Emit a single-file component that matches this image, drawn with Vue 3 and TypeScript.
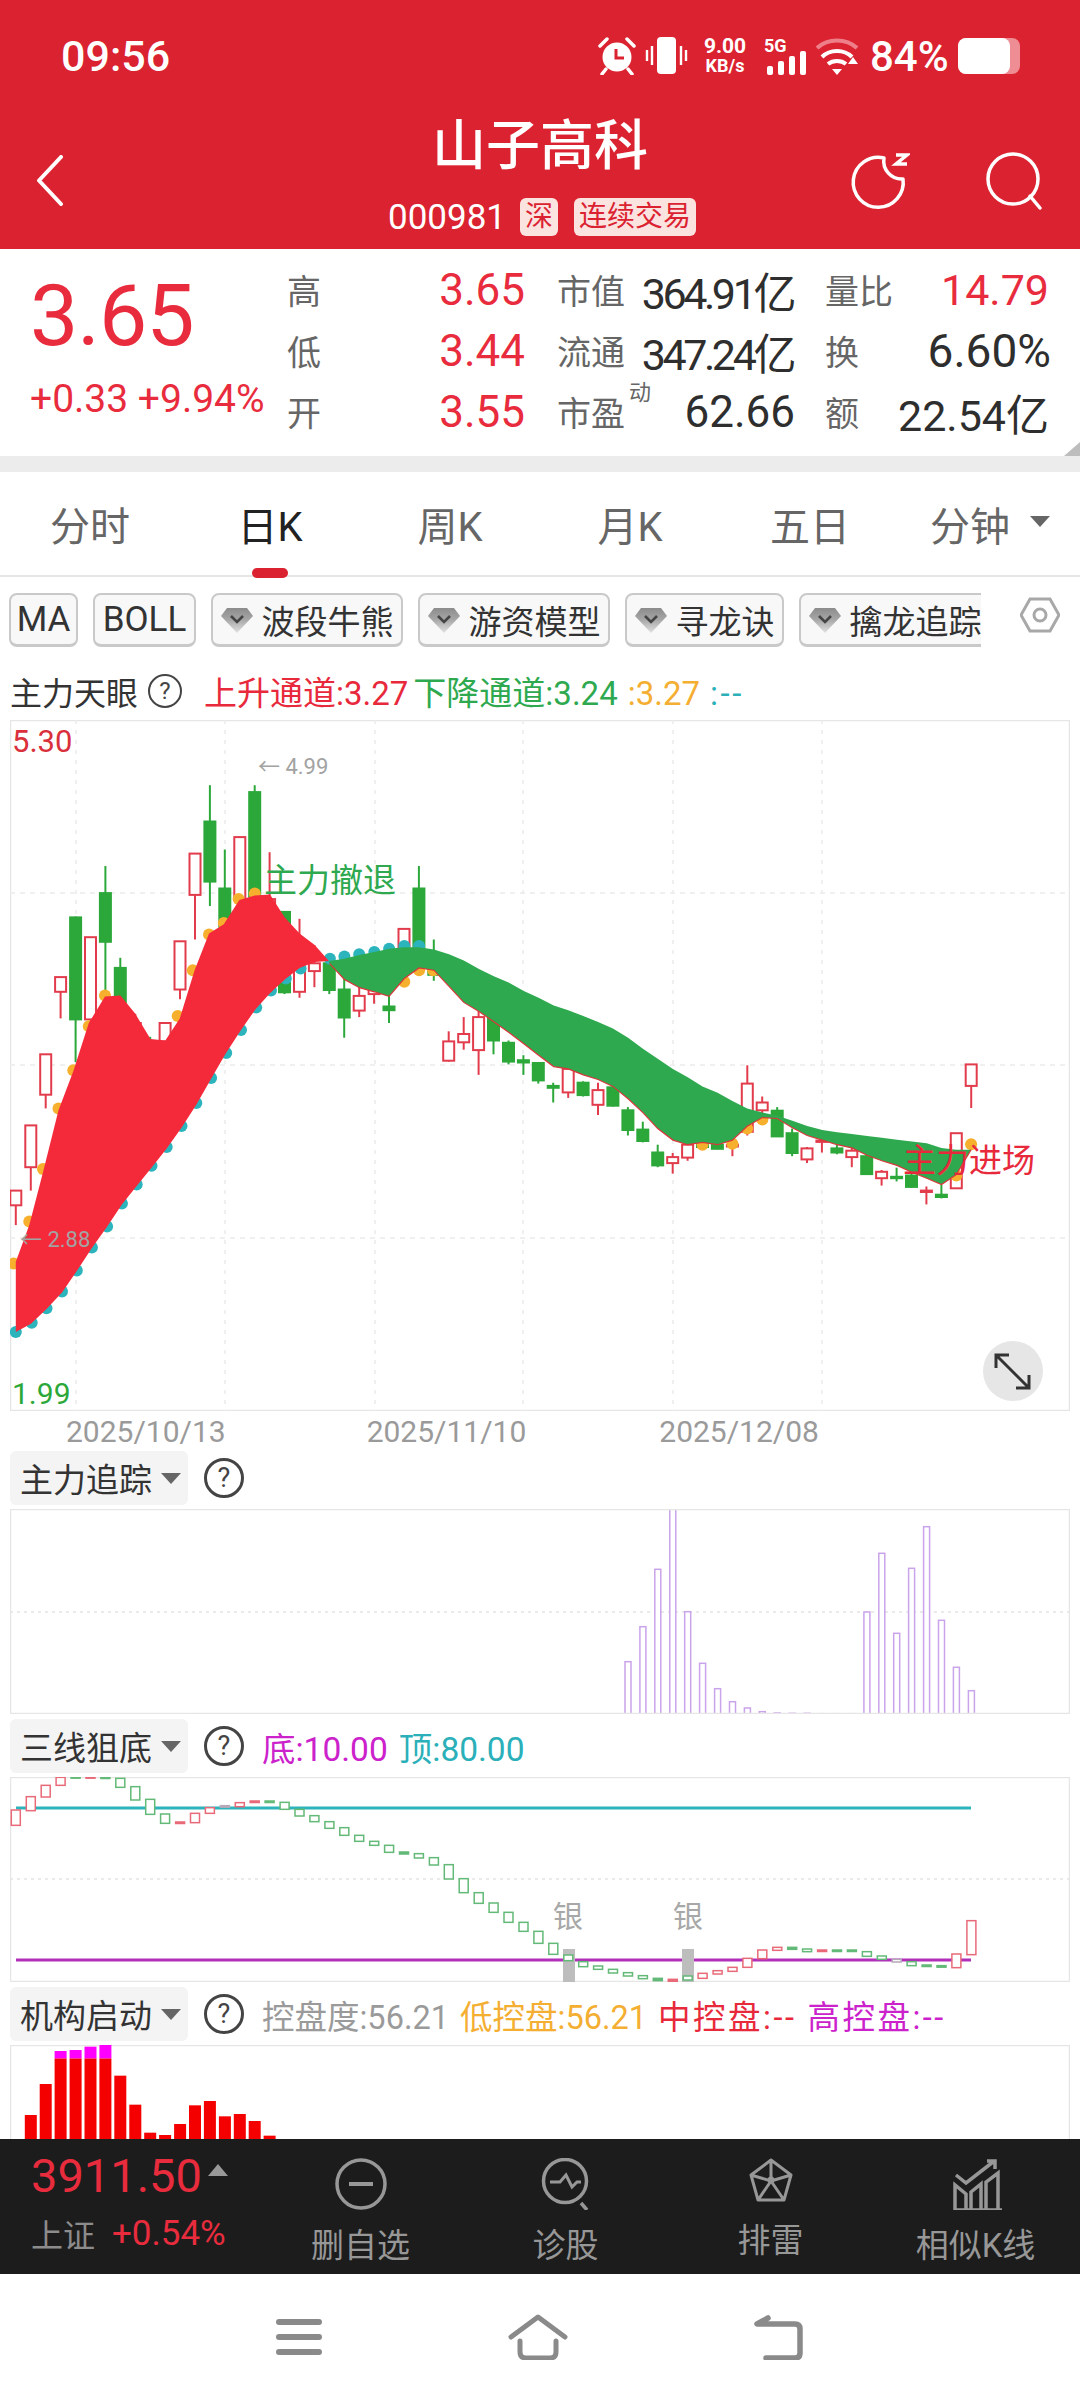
<template>
  <div class="page">
    <div class="content">
      <header class="header">
        <div class="status">
          <span class="clock">09:56</span>
          <div class="status-right">
            <svg class="st-alarm" width="38" height="38" viewBox="0 0 38 38">
              <circle cx="19" cy="20" r="14.5" fill="#fff" />
              <path d="M18 12v9h8" fill="none" stroke="#db2230" stroke-width="3" />
              <path d="M2 9l7-7M36 9l-7-7M8 32l-4 5M30 32l4 5" stroke="#fff" stroke-width="3.5" stroke-linecap="round" />
            </svg>
            <svg class="st-vibrate" width="43" height="38" viewBox="0 0 43 38">
              <rect x="12" y="0" width="19" height="37" rx="4" fill="#fff" />
              <path d="M2 13v11M7 9v19M36 9v19M41 13v11" stroke="#fff" stroke-width="2.4" />
            </svg>
            <div class="st-speed"><b>9.00</b><b class="kb">KB/s</b></div>
            <div class="st-net">
              <b>5G</b>
              <svg width="40" height="24" viewBox="0 0 40 24">
                <rect x="0" y="15" width="6" height="9" rx="2" fill="#fff" />
                <rect x="11" y="10" width="6" height="14" rx="2" fill="#fff" />
                <rect x="22" y="5" width="6" height="19" rx="2" fill="#fff" />
                <rect x="33" y="0" width="6" height="24" rx="2" fill="#fff" />
              </svg>
            </div>
            <svg class="st-wifi" width="44" height="38" viewBox="0 0 44 38">
              <path d="M2 11C13 1 31 1 42 11" fill="none" stroke="#ee7f88" stroke-width="4" />
              <path d="M7 20C15 12 29 12 37 20M13 27c5-4 13-4 18 0" fill="none" stroke="#fff" stroke-width="4" />
              <path d="M17 32h10l-5 6zM33 27h10l-5-7z" fill="#fff" />
            </svg>
            <span class="st-battery-text">84%</span>
            <div class="battery"><div class="battery-fill"></div></div>
          </div>
        </div>
        <div class="title-bar">
          <svg class="back" width="27" height="51" viewBox="0 0 27 51">
            <path d="M25 2L3 25.5 25 49" fill="none" stroke="#fff" stroke-width="4" stroke-linecap="round" stroke-linejoin="round" />
          </svg>
          <div class="title-box">
            <h1 class="title">山子高科</h1>
            <div class="subtitle">
              <span class="code">000981</span>
              <span class="tag">深</span>
              <span class="tag">连续交易</span>
            </div>
          </div>
          <div class="title-actions">
            <svg width="70" height="70" viewBox="0 0 70 70">
              <path d="M44 12A25 25 0 1 0 63 33A18 18 0 0 1 44 12Z" fill="none" stroke="#fff" stroke-width="3.5" stroke-linejoin="round" />
              <path d="M56 9h11L56 18h11" fill="none" stroke="#fff" stroke-width="3.5" />
            </svg>
            <svg width="70" height="70" viewBox="0 0 70 70">
              <circle cx="33" cy="33" r="25" fill="none" stroke="#fff" stroke-width="3.5" />
              <path d="M50 50l10 12" stroke="#fff" stroke-width="3.5" stroke-linecap="round" />
            </svg>
          </div>
        </div>
      </header>

      <section class="quote">
        <div class="price-box">
          <div class="price">3.65</div>
          <div class="change">+0.33 +9.94%</div>
        </div>
        <div class="quote-grid">
          <div v-for="row in quoteRows" :key="row[0].label" class="quote-row">
            <div v-for="(cell, n) in row" :key="cell.label" class="pair" :class="'pair-' + n">
              <span class="q-label">{{ cell.label }}<sup v-if="cell.sup" class="q-sup">{{ cell.sup }}</sup></span>
              <span class="q-value" :class="[cell.cls, { up: cell.up }]">{{ cell.value }}</span>
            </div>
          </div>
        </div>
        <i class="fold"></i>
      </section>
      <div class="band"></div>

      <nav class="tabs">
        <div v-for="tab in tabs" :key="tab" class="tab" :class="{ active: tab === '日K' }">
          {{ tab }}
          <i v-if="tab === '分钟'" class="caret caret-lg"></i>
        </div>
      </nav>

      <div class="chips-row">
        <div class="chips">
          <div v-for="chip in chips" :key="chip.name" class="chip" :class="{ 'chip-plain': !chip.gem }" :style="{ width: chip.width + 'px' }">
            <svg v-if="chip.gem" class="gem" width="32" height="26" viewBox="0 0 32 26">
              <path d="M6 1h20l6 8-16 17L0 9z" fill="url(#gemFill)" />
              <path d="M10 9l6 6 6-6" fill="none" stroke="#444" stroke-width="2.6" />
            </svg>
            {{ chip.name }}
          </div>
        </div>
        <svg class="hex" width="40" height="36" viewBox="0 0 40 36">
          <defs>
            <linearGradient id="gemFill" x1="0" y1="0" x2="0" y2="1" gradientUnits="objectBoundingBox">
              <stop offset="0" stop-color="#8c8c8c" />
              <stop offset="0.45" stop-color="#a5a5a5" />
              <stop offset="1" stop-color="#e2e2e2" />
            </linearGradient>
          </defs>
          <path d="M10 2h20l9 16-9 16H10L1 18z" fill="none" stroke="#a8a8a8" stroke-width="3" />
          <circle cx="20" cy="18" r="6" fill="none" stroke="#a8a8a8" stroke-width="3" />
        </svg>
      </div>

      <div class="main-title">
        <span class="ind-name">主力天眼</span>
        <span class="help help-sm">?</span>
        <span class="legend main-legend">
          <span class="c-red">上升通道:3.27</span>
          <span class="c-green">下降通道:3.24</span>
          <span class="c-orange gap-l">:3.27</span>
          <span class="c-teal gap-l dash">:--</span>
        </span>
      </div>

      <svg class="main-chart" width="1060" height="691" viewBox="0 0 1060 691">
        <rect x="0.5" y="0.5" width="1059" height="690" fill="none" stroke="#e6e6e6" stroke-width="1.5" />
        <path v-for="y in [173, 345, 518]" :key="'h' + y" :d="`M0 ${y}H1060`" stroke="#ececec" stroke-width="1.5" stroke-dasharray="5 5" />
        <path v-for="x in [66, 215, 365, 513, 663, 812]" :key="'v' + x" :d="`M${x} 0V691`" stroke="#ececec" stroke-width="1.5" stroke-dasharray="4 6" />

        <g v-for="(c, i) in candles" :key="'c' + i">
          <path :d="`M${candleX(i)} ${zy(c[0])}V${zy(c[3])}`" :stroke="c[4] === 'r' ? RED : GREEN" stroke-width="2" />
          <rect
            :x="candleX(i) - 5.5"
            :y="zy(c[1])"
            width="11"
            :height="zy(c[2]) - zy(c[1])"
            :fill="c[4] === 'r' ? '#fff' : GREEN"
            :stroke="c[4] === 'r' ? RED : GREEN"
            stroke-width="2"
          />
        </g>

        <circle v-for="(d, i) in orangeDots" :key="'o' + i" :cx="zx(d[0])" :cy="zy(d[1])" r="6" fill="#f7b02e" />
        <circle v-for="(d, i) in tealDots" :key="'t' + i" :cx="zx(d[0])" :cy="zy(d[1])" r="6" fill="#2cb4bd" />

        <polygon :points="pts(redBand)" fill="#f42a3b" />
        <polygon :points="pts(greenBand)" fill="#2ea94f" />
        <polyline :points="pts(greenLower)" fill="none" stroke="#d9383a" stroke-width="1.2" />

        <text class="axis-price" x="2" y="32" fill="#d9303c">5.30</text>
        <text class="axis-price axis-low" x="2" y="684" fill="#2ca83a">1.99</text>
        <text class="mark" x="248" y="54">← 4.99</text>
        <text class="mark" x="10" y="527">← 2.88</text>
        <text class="signal" x="254" y="172" fill="#2ea94f">主力撤退</text>
        <text class="signal" x="893" y="452" fill="#e8293c">主力进场</text>

        <circle cx="1003" cy="651" r="30" fill="#e6e6e6" />
        <path d="M986 635l33 33M986 648v-13h13M1019 655v13h-13" fill="none" stroke="#333" stroke-width="3" />
      </svg>
      <div class="dates">
        <span v-for="d in dates" :key="d" class="date">{{ d }}</span>
      </div>

      <section class="panel">
        <div class="panel-head">
          <div class="select">主力追踪<i class="caret"></i></div>
          <span class="help">?</span>
        </div>
        <svg class="sub-chart" width="1060" height="205" viewBox="0 0 1060 205">
          <path d="M0 103H1060" stroke="#e4e4e4" stroke-width="1.5" stroke-dasharray="3 4" />
          <rect
            v-for="(top, n) in trackBars"
            :key="'b' + n"
            :x="subX(41 + n) - 3"
            :y="top"
            width="6"
            :height="Math.max(205 - top, 1)"
            fill="#fff"
            stroke="#c9a4ea"
            stroke-width="1.5"
          />
          <rect x="0.5" y="0.5" width="1059" height="204" fill="none" stroke="#e6e6e6" stroke-width="1.5" />
        </svg>
      </section>

      <section class="panel">
        <div class="panel-head">
          <div class="select">三线狙底<i class="caret"></i></div>
          <span class="help">?</span>
          <span class="legend">
            <span class="c-purple">底:10.00</span>
            <span class="c-teal gap-m">顶:80.00</span>
          </span>
        </div>
        <svg class="sub-chart" width="1060" height="205" viewBox="0 0 1060 205">
          <path d="M0 102H1060" stroke="#e4e4e4" stroke-width="1.5" stroke-dasharray="3 4" />
          <rect x="0.5" y="0.5" width="1059" height="204" fill="none" stroke="#e6e6e6" stroke-width="1.5" />
          <path d="M6 31H961" stroke="#2db3bb" stroke-width="3" />
          <path d="M6 183H961" stroke="#b12fb9" stroke-width="3" />
          <rect x="553" y="172" width="12" height="33" fill="#bdbdbd" />
          <rect x="672" y="172" width="12" height="33" fill="#bdbdbd" />
          <rect
            v-for="(t, n) in ticks"
            :key="'k' + n"
            :x="subX(n) - 4.5"
            :y="t[0] / 3 - 57"
            width="9"
            :height="Math.max((t[1] - t[0]) / 3, 1.5)"
            :fill="t[1] - t[0] < 8 ? tickColor(t[2]) : '#fff'"
            :stroke="tickColor(t[2])"
            stroke-width="1.5"
          />
          <text class="silver" x="543" y="150">银</text>
          <text class="silver" x="663" y="150">银</text>
        </svg>
      </section>

      <section class="panel">
        <div class="panel-head">
          <div class="select">机构启动<i class="caret"></i></div>
          <span class="help">?</span>
          <span class="legend legend-sm">
            <span class="c-gray">控盘度:56.21</span>
            <span class="c-orange gap-s">低控盘:56.21</span>
            <span class="c-red gap-s dash">中控盘:--</span>
            <span class="c-purple gap-s dash">高控盘:--</span>
          </span>
        </div>
        <svg class="sub-chart" width="1060" height="205" viewBox="0 0 1060 205">
          <rect x="0.5" y="0.5" width="1059" height="204" fill="none" stroke="#e6e6e6" stroke-width="1.5" />
          <g v-for="(b, n) in orgBars" :key="'r' + n">
            <rect :x="subX(n + 1) - 6" :y="b[0] / 3 - 64" width="12" :height="205" fill="#f50000" />
            <rect v-if="b[1]" :x="subX(n + 1) - 6" :y="b[1] / 3 - 64" width="12" :height="(b[0] - b[1]) / 3" fill="#ff00ff" />
          </g>
        </svg>
      </section>
    </div>

    <footer class="footer">
      <div class="index">
        <div class="index-price">3911.50<i class="up-tri"></i></div>
        <div class="index-sub"><span class="index-name">上证</span><span class="index-pct">+0.54%</span></div>
      </div>
      <div class="action">
        <svg width="52" height="52" viewBox="0 0 52 52">
          <circle cx="26" cy="26" r="24" fill="none" stroke="#979797" stroke-width="3.5" />
          <path d="M14 26h24" stroke="#979797" stroke-width="4" />
        </svg>
        <span>删自选</span>
      </div>
      <div class="action">
        <svg width="52" height="52" viewBox="0 0 52 52">
          <circle cx="25" cy="23" r="21.5" fill="none" stroke="#979797" stroke-width="3.5" />
          <path d="M10 24h10l6-7 6 12 5-5h4" fill="none" stroke="#979797" stroke-width="3" />
          <path d="M41 45l6 7" stroke="#979797" stroke-width="3.5" />
        </svg>
        <span>诊股</span>
      </div>
      <div class="action action-short">
        <svg width="44" height="44" viewBox="0 0 44 44">
          <path d="M22 2l20 15-7 25H9L2 17z M22 2v21M2 17l20 6 20-6M9 42l13-19 13 19" fill="none" stroke="#979797" stroke-width="3" stroke-linejoin="round" />
          <circle cx="22" cy="22" r="3.5" fill="#979797" />
        </svg>
        <span>排雷</span>
      </div>
      <div class="action">
        <svg width="52" height="52" viewBox="0 0 52 52">
          <path d="M5 52V27l11 9v16zM5 52h47M21 52V34l10-8v26zM36 52V24l12-9v37z" fill="none" stroke="#979797" stroke-width="3.5" />
          <path d="M6 17l10 8 27-21M37 3h8v8" fill="none" stroke="#979797" stroke-width="3.5" />
        </svg>
        <span>相似K线</span>
      </div>
    </footer>

    <div class="navbar">
      <svg width="46" height="36" viewBox="0 0 46 36">
        <path d="M3 3h40M3 18h40M3 33h40" stroke="#8a8a8a" stroke-width="6" stroke-linecap="round" />
      </svg>
      <svg width="60" height="46" viewBox="0 0 60 46">
        <path d="M3 23L30 3l27 20" fill="none" stroke="#8a8a8a" stroke-width="5" stroke-linecap="round" stroke-linejoin="round" />
        <path d="M12 27v11q0 6 6 6h24q6 0 6-6V27" fill="none" stroke="#8a8a8a" stroke-width="5" stroke-linecap="round" />
      </svg>
      <svg width="50" height="46" viewBox="0 0 50 46">
        <path d="M14 4L3 10h38q5 0 5 5v24q0 5-5 5H12" fill="none" stroke="#8a8a8a" stroke-width="5.5" stroke-linecap="round" stroke-linejoin="round" />
      </svg>
    </div>
  </div>
</template>

<script setup lang="ts">
type Kind = 'r' | 'g'
type Candle = [number, number, number, number, Kind]
type Point = [number, number]

const RED = '#e23c4c'
const GREEN = '#2ca83a'

interface QuoteCell {
  label: string
  value: string
  up?: boolean
  sup?: string
  cls?: string
}

const quoteRows: QuoteCell[][] = [
  [
    { label: '高', value: '3.65', up: true },
    { label: '市值', value: '364.91亿', cls: 'tight' },
    { label: '量比', value: '14.79', up: true },
  ],
  [
    { label: '低', value: '3.44', up: true },
    { label: '流通', value: '347.24亿', cls: 'tight' },
    { label: '换', value: '6.60%', cls: 'big' },
  ],
  [
    { label: '开', value: '3.55', up: true },
    { label: '市盈', sup: '动', value: '62.66', cls: 'mid' },
    { label: '额', value: '22.54亿' },
  ],
]

const tabs = ['分时', '日K', '周K', '月K', '五日', '分钟']

const chips = [
  { name: 'MA', width: 69, gem: false },
  { name: 'BOLL', width: 103, gem: false },
  { name: '波段牛熊', width: 192, gem: true },
  { name: '游资模型', width: 192, gem: true },
  { name: '寻龙诀', width: 159, gem: true },
  { name: '擒龙追踪', width: 192, gem: true },
]

const dates = ['2025/10/13', '2025/11/10', '2025/12/08']

// traced from the chart: x is 2.904/px and y is 2.178/px, chart top is y = 0
const zx = (x: number) => +(x / 2.904 - 10).toFixed(1)
const zy = (y: number) => +(y / 2.178).toFixed(1)
const candleX = (i: number) => zx(46 + 43.35 * i)
const subX = (i: number) => +(5.84 + 14.93 * i).toFixed(1)
const pts = (list: Point[]) => list.map((p) => `${zx(p[0])},${zy(p[1])}`).join(' ')
const tickColor = (k: string) => (k === 'r' ? '#e86a78' : k === 'g' ? '#63b977' : '#b5a9b9')

// wick top, body top, body bottom, wick bottom
const candles: Candle[] = [
  [1025, 1025, 1057, 1100, 'r'], [883, 883, 974, 1025, 'r'], [728, 728, 816, 846, 'r'], [560, 560, 592, 650, 'r'],
  [428, 430, 652, 745, 'g'], [473, 473, 652, 680, 'r'], [318, 377, 483, 600, 'g'], [518, 540, 620, 640, 'g'],
  [640, 660, 700, 720, 'r'], [690, 700, 720, 730, 'g'], [660, 660, 700, 720, 'r'], [482, 482, 587, 608, 'r'],
  [291, 291, 381, 478, 'r'], [142, 221, 352, 405, 'g'], [282, 367, 450, 470, 'g'], [255, 255, 390, 420, 'r'],
  [142, 157, 385, 400, 'g'], [288, 390, 440, 470, 'r'], [418, 418, 593, 597, 'g'], [433, 540, 592, 605, 'r'],
  [490, 530, 547, 582, 'r'], [530, 530, 588, 597, 'g'], [530, 587, 648, 692, 'g'], [580, 601, 633, 647, 'r'],
  [570, 580, 597, 618, 'r'], [600, 624, 632, 660, 'g'], [455, 455, 500, 520, 'r'], [318, 367, 497, 520, 'g'],
  [478, 541, 555, 568, 'g'], [678, 700, 742, 744, 'r'], [647, 684, 702, 718, 'r'], [630, 647, 719, 773, 'r'],
  [630, 648, 698, 728, 'g'], [698, 703, 744, 750, 'g'], [730, 741, 746, 773, 'g'], [745, 747, 785, 792, 'g'],
  [790, 797, 801, 833, 'g'], [750, 760, 811, 823, 'r'], [787, 790, 817, 820, 'g'], [790, 806, 838, 860, 'r'],
  [790, 800, 840, 842, 'g'], [843, 850, 893, 905, 'g'], [875, 892, 917, 920, 'g'], [925, 942, 970, 974, 'g'],
  [943, 952, 965, 988, 'r'], [915, 925, 953, 960, 'r'], [915, 920, 930, 932, 'g'], [915, 925, 934, 935, 'g'],
  [915, 925, 929, 950, 'r'], [752, 792, 897, 905, 'r'], [820, 833, 850, 882, 'r'], [843, 851, 907, 908, 'g'],
  [890, 900, 943, 950, 'g'], [930, 933, 957, 965, 'r'], [905, 916, 919, 942, 'r'], [925, 933, 942, 946, 'g'],
  [930, 938, 952, 974, 'r'], [945, 950, 989, 990, 'g'], [980, 984, 998, 1014, 'r'], [975, 995, 998, 1005, 'g'],
  [985, 992, 1017, 1019, 'g'], [1016, 1025, 1028, 1055, 'r'], [1012, 1034, 1039, 1042, 'g'], [900, 900, 1020, 1021, 'r'],
  [750, 750, 797, 845, 'r'],
]

const orangeDots: Point[] = [
  [40, 1184], [85, 1092], [125, 978], [170, 846], [213, 763], [258, 667], [305, 600], [516, 645], [560, 545],
  [607, 467], [650, 442], [693, 390], [740, 378], [1174, 570], [1217, 545], [1258, 545], [2040, 925], [2127, 923],
  [2170, 890], [2214, 870], [2777, 992], [2820, 924],
]

const tealDots: Point[] = [
  [46, 1333], [92, 1313], [135, 1281], [180, 1245], [223, 1199], [267, 1149], [311, 1103], [354, 1053], [397, 1012],
  [440, 971], [484, 930], [527, 884], [570, 834], [613, 780], [657, 725], [700, 675], [744, 626], [787, 589],
  [830, 563], [873, 541], [958, 520], [1000, 515], [1043, 510], [1087, 505], [1130, 498], [1174, 492], [1217, 492],
]

const redBand: Point[] = [
  [46, 1180], [85, 1100], [125, 985], [170, 850], [213, 765], [258, 660], [305, 602], [350, 600], [393, 640], [437, 695],
  [480, 698], [522, 650], [565, 545], [607, 465], [650, 445], [695, 392], [740, 382], [784, 380], [827, 430], [870, 465],
  [914, 490], [955, 525], [914, 527], [870, 540], [827, 565], [784, 595], [742, 630], [700, 675], [655, 727], [612, 783],
  [570, 838], [527, 888], [484, 933], [440, 975], [397, 1015], [354, 1055], [310, 1105], [267, 1150], [223, 1200],
  [180, 1247], [135, 1283], [90, 1315], [46, 1333],
]

const greenUpper: Point[] = [
  [955, 525], [1000, 520], [1043, 512], [1087, 505], [1130, 498], [1174, 495], [1217, 495], [1260, 500], [1304, 510],
  [1347, 524], [1391, 542], [1434, 558], [1477, 572], [1521, 590], [1564, 605], [1608, 622], [1650, 632], [1694, 645],
  [1737, 658], [1780, 672], [1824, 692], [1867, 716], [1910, 738], [1954, 760], [1997, 778], [2040, 798], [2084, 812],
  [2127, 830], [2170, 846], [2214, 855], [2257, 862], [2301, 873], [2344, 884], [2388, 893], [2431, 898], [2474, 902],
  [2518, 906], [2561, 910], [2605, 914], [2648, 918], [2691, 922], [2734, 932], [2777, 936], [2820, 936],
]

const greenLower: Point[] = [
  [2820, 936], [2777, 990], [2734, 1012], [2691, 998], [2648, 985], [2605, 970], [2561, 960], [2518, 948], [2474, 932],
  [2431, 925], [2388, 915], [2344, 905], [2301, 888], [2257, 868], [2214, 866], [2170, 885], [2127, 915], [2084, 925],
  [2040, 920], [1997, 925], [1954, 915], [1910, 890], [1867, 855], [1824, 825], [1780, 798], [1737, 783], [1694, 773],
  [1650, 760], [1608, 755], [1564, 730], [1521, 705], [1477, 680], [1434, 657], [1391, 635], [1347, 615], [1304, 580],
  [1260, 545], [1217, 540], [1174, 563], [1130, 602], [1087, 592], [1044, 583], [1000, 565], [957, 530],
]

const greenBand: Point[] = [...greenUpper, ...greenLower]

const trackBars = [665, 560, 388, 208, 515, 670, 746, 785, 804, 815, 819, 820, 820, 821, 821, 821, 516, 340, 580, 385, 260, 541, 682, 752].map(
  (z) => +(z / 3 - 69).toFixed(1),
)

const ticks: [number, number, string][] = [
  [270, 316, 'r'], [230, 272, 'r'], [196, 231, 'r'], [172, 196, 'r'], [170, 172, 'g'], [170, 172, 'r'], [171, 175, 'g'], [175, 202, 'g'],
  [200, 240, 'g'], [238, 283, 'g'], [282, 310, 'g'], [306, 310, 'r'], [280, 308, 'r'], [263, 280, 'r'], [257, 260, 'x'], [248, 260, 'r'],
  [243, 247, 'r'], [243, 247, 'g'], [247, 268, 'g'], [268, 288, 'g'], [287, 305, 'g'], [305, 325, 'g'], [323, 346, 'g'], [346, 364, 'g'],
  [364, 376, 'g'], [376, 397, 'g'], [396, 402, 'g'], [401, 414, 'g'], [413, 435, 'g'], [434, 477, 'g'], [476, 518, 'g'], [518, 550, 'g'],
  [549, 577, 'g'], [577, 607, 'g'], [607, 634, 'g'], [634, 670, 'g'], [670, 703, 'g'], [705, 722, 'g'], [725, 740, 'g'], [738, 748, 'g'],
  [748, 759, 'g'], [758, 768, 'g'], [767, 776, 'g'], [775, 782, 'g'], [778, 785, 'r'], [768, 780, 'g'], [760, 775, 'r'], [752, 762, 'r'],
  [742, 754, 'r'], [715, 742, 'r'], [690, 716, 'r'], [682, 691, 'r'], [682, 688, 'g'], [687, 695, 'g'], [690, 694, 'r'], [690, 694, 'g'],
  [690, 694, 'g'], [695, 709, 'g'], [708, 718, 'g'], [718, 726, 'x'], [725, 737, 'g'], [735, 739, 'g'], [737, 741, 'g'], [702, 743, 'r'],
  [602, 704, 'r'],
]

// red top, magenta top (0 when there is none)
const orgBars: [number, number][] = [
  [402, 0], [309, 0], [232, 210], [232, 207], [232, 197], [232, 191], [284, 0], [371, 0], [455, 0], [462, 0], [429, 0], [373, 0], [360, 0],
  [406, 0], [399, 0], [420, 0], [464, 0],
]
</script>

<style scoped>
.page {
  width: 1080px;
  height: 2400px;
  display: flex;
  flex-direction: column;
  overflow: hidden;
  background: #fff;
  font-family: Roboto, 'Noto Sans CJK SC', sans-serif;
  color: #333;
}

.content {
  flex: 1;
  min-height: 0;
  overflow: hidden;
}

.header {
  height: 249px;
  background: #db2230;
  color: #fff;
}

.status {
  height: 112px;
  display: flex;
  justify-content: space-between;
  align-items: center;
  padding: 0 60px 0 61px;
}

.clock {
  font-size: 43px;
  font-weight: 500;
}

.status-right {
  display: flex;
  align-items: center;
}

.status-right svg {
  display: block;
}

.st-vibrate {
  margin-left: 9px;
}

.st-speed {
  margin-left: 14px;
  width: 46px;
  display: flex;
  flex-direction: column;
  align-items: center;
  font-size: 21px;
  line-height: 20px;
}

.st-speed .kb {
  font-size: 18px;
}

.st-net {
  margin-left: 16px;
  width: 40px;
  height: 38px;
  position: relative;
  font-size: 18px;
  line-height: 18px;
}

.st-net svg {
  position: absolute;
  left: 3px;
  bottom: 0;
}

.st-wifi {
  margin-left: 11px;
}

.st-battery-text {
  margin-left: 11px;
  font-size: 42px;
  font-weight: 500;
  width: 78px;
  white-space: nowrap;
}

.battery {
  margin-left: 10px;
  width: 62px;
  height: 36px;
  border-radius: 8px;
  background: #ee8d94;
}

.battery-fill {
  width: 52px;
  height: 36px;
  border-radius: 8px;
  background: #fff;
}

.title-bar {
  height: 137px;
  display: grid;
  grid-template-columns: 1fr auto 1fr;
  align-items: center;
}

.back {
  margin-left: 36px;
}

.title-box {
  align-self: start;
  text-align: center;
}

.title {
  margin: 0;
  height: 70px;
  font-size: 54px;
  line-height: 70px;
  font-weight: 500;
}

.subtitle {
  margin-top: 16px;
  height: 38px;
  padding-left: 4px;
  display: flex;
  align-items: center;
  justify-content: center;
  gap: 16px;
}

.code {
  font-size: 35px;
  margin-right: -2px;
}

.tag {
  height: 38px;
  padding: 0 5px;
  border-radius: 6px;
  background: #fbe3e0;
  color: #db2230;
  font-size: 28px;
  line-height: 38px;
}

.title-actions {
  display: flex;
  justify-content: flex-end;
  gap: 70px;
  padding-right: 30px;
}

.quote {
  position: relative;
  height: 207px;
  display: flex;
}

.price-box {
  width: 287px;
  padding-left: 30px;
  box-sizing: border-box;
}

.price {
  margin-top: 18px;
  height: 98px;
  font-size: 86px;
  line-height: 98px;
  letter-spacing: -1px;
  color: #e92c3d;
}

.change {
  margin-top: 12px;
  font-size: 39px;
  line-height: 44px;
  color: #e92c3d;
  white-space: nowrap;
}

.quote-grid {
  padding-top: 10px;
}

.quote-row {
  height: 61px;
  display: flex;
  align-items: center;
  gap: 32px;
}

.pair {
  display: flex;
  justify-content: space-between;
  align-items: center;
  white-space: nowrap;
}

.pair-0 {
  width: 238px;
}

.pair-0 .q-value {
  font-size: 44px;
}

.pair-1 {
  width: 236px;
}

.pair-2 {
  width: 224px;
}

.q-label {
  font-size: 34px;
  color: #666;
}

.q-sup {
  margin-left: 4px;
  font-size: 22px;
  line-height: 0;
  vertical-align: 26px;
}

.q-value {
  font-size: 43px;
  color: #2e2e2e;
}

.q-value.up {
  color: #e92c3d;
}

.q-value.tight {
  letter-spacing: -3.4px;
}

.q-value.big {
  font-size: 46px;
  margin-right: -2px;
}

.q-value.mid {
  font-size: 44px;
  margin-right: -2px;
}

.fold {
  position: absolute;
  right: 0;
  bottom: 0;
  border-style: solid;
  border-width: 0 0 14px 16px;
  border-color: transparent transparent #bdbdbd transparent;
}

.band {
  height: 16px;
  background: #ececec;
}

.tabs {
  height: 103px;
  display: flex;
  border-bottom: 2px solid #e6e6e6;
}

.tab {
  position: relative;
  width: 180px;
  display: flex;
  align-items: center;
  justify-content: center;
  font-size: 40px;
  color: #666;
}

.tab.active {
  color: #222;
}

.tab.active::after {
  content: '';
  position: absolute;
  left: 72px;
  bottom: -3px;
  width: 36px;
  height: 10px;
  border-radius: 5px;
  background: #db2230;
}

.caret {
  display: inline-block;
  margin-left: 9px;
  border-style: solid;
  border-width: 11px 10px 0 10px;
  border-color: #666 transparent transparent transparent;
}

.caret-lg {
  margin-left: 20px;
  margin-bottom: 4px;
}

.chips-row {
  margin-top: 16px;
  height: 54px;
  padding-left: 9px;
  display: flex;
}

.chips {
  width: 972px;
  display: flex;
  gap: 15px;
  overflow: hidden;
}

.chip {
  flex-shrink: 0;
  height: 54px;
  box-sizing: border-box;
  display: flex;
  align-items: center;
  justify-content: center;
  gap: 9px;
  border: 2px solid #c9c9c9;
  border-bottom-width: 3px;
  border-radius: 8px;
  background: #f8f8f8;
  font-size: 33px;
  color: #333;
  white-space: nowrap;
}

.chip-plain {
  font-size: 35px;
}

.hex {
  margin: 4px 0 0 39px;
}

.main-title {
  height: 73px;
  padding: 14px 0 0 10px;
  box-sizing: border-box;
  display: flex;
  align-items: center;
  font-size: 32px;
  white-space: nowrap;
}

.ind-name {
  color: #333;
}

.help {
  flex-shrink: 0;
  box-sizing: border-box;
  width: 40px;
  height: 40px;
  margin-left: 16px;
  border: 3px solid #444;
  border-radius: 50%;
  display: flex;
  align-items: center;
  justify-content: center;
  font-size: 27px;
  color: #444;
}

.help-sm {
  width: 34px;
  height: 34px;
  margin-left: 10px;
  border-width: 2px;
  font-size: 24px;
}

.legend {
  margin-left: 18px;
  font-size: 33.5px;
  white-space: nowrap;
}

.main-legend {
  margin-left: 22px;
  font-size: 33px;
}

.legend-sm {
  font-size: 32.5px;
}

.c-red {
  color: #e8293c;
}

.c-green {
  color: #2ea94f;
  margin-left: 5px;
}

.c-orange {
  color: #f4ae32;
}

.c-teal {
  color: #2bb0b9;
}

.c-purple {
  color: #cc22cc;
}

.c-gray {
  color: #9a9a9a;
}

.gap-l {
  margin-left: 10px;
}

.gap-m {
  margin-left: 11px;
}

.gap-s {
  margin-left: 11px;
}

.dash {
  letter-spacing: 2.5px;
}

.main-chart {
  display: block;
  margin-left: 10px;
}

.axis-price {
  font-size: 31px;
}

.axis-low {
  font-size: 30px;
}

.mark {
  font-size: 22px;
  fill: #a3a3a3;
}

.signal {
  font-size: 33px;
}

.dates {
  height: 40px;
  padding-left: 66px;
  display: flex;
  gap: 141px;
  align-items: center;
}

.date {
  font-size: 30px;
  white-space: nowrap;
  color: #9a9a9a;
}

.date:last-child {
  margin-left: -8px;
}

.silver {
  font-size: 30px;
  fill: #a8a8a8;
}

.panel {
  margin-bottom: 5px;
}

.panel-head {
  height: 54px;
  margin-bottom: 4px;
  padding-left: 10px;
  display: flex;
  align-items: center;
}

.select {
  width: 178px;
  height: 54px;
  box-sizing: border-box;
  padding-left: 10px;
  display: flex;
  align-items: center;
  border-radius: 6px;
  background: #f4f4f4;
  font-size: 33px;
  color: #333;
  white-space: nowrap;
}

.sub-chart {
  display: block;
  margin-left: 10px;
}

.footer {
  height: 135px;
  flex-shrink: 0;
  display: flex;
  background: #1c1c1c;
  color: #979797;
}

.index {
  width: 258px;
  box-sizing: border-box;
  padding: 9px 0 0 31px;
}

.index-price {
  position: relative;
  font-size: 47px;
  line-height: 56px;
  color: #e92c3d;
}

.up-tri {
  position: absolute;
  left: 177px;
  top: 16px;
  border-style: solid;
  border-width: 0 10px 12px 10px;
  border-color: transparent transparent #999 transparent;
}

.index-sub {
  margin-top: 6px;
  display: flex;
  align-items: center;
  font-size: 32px;
}

.index-name {
  width: 81px;
  color: #8c8c8c;
}

.index-pct {
  font-size: 35px;
  color: #e92c3d;
}

.action {
  width: 205px;
  padding-top: 19px;
  box-sizing: border-box;
  display: flex;
  flex-direction: column;
  align-items: center;
  font-size: 33px;
  line-height: 34px;
  white-space: nowrap;
}

.action svg {
  display: block;
}

.action span {
  margin-top: 19px;
}

.action-short span {
  margin-top: 22px;
}

.navbar {
  height: 126px;
  flex-shrink: 0;
  display: flex;
  align-items: center;
  justify-content: center;
  gap: 186px;
  background: #fff;
}
</style>

<style>
html,
body {
  margin: 0;
  background: #fff;
}
</style>
